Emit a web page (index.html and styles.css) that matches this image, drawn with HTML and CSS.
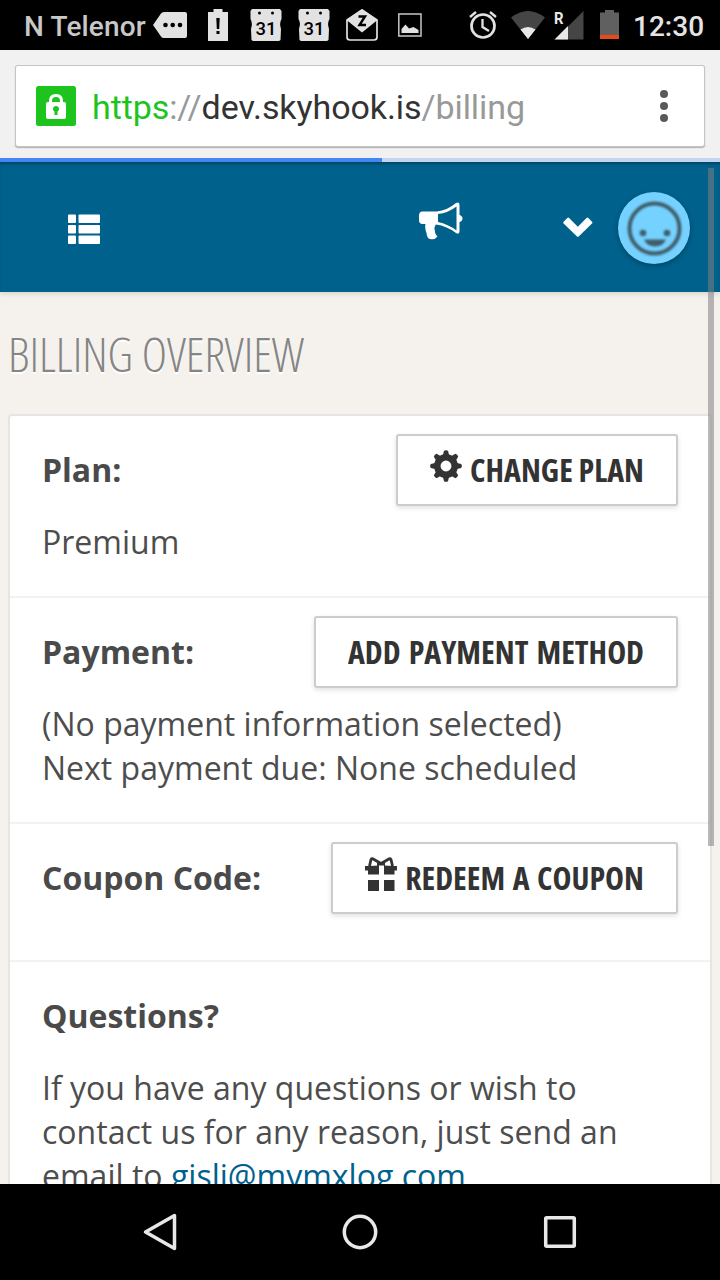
FILE: index.html
```
<!DOCTYPE html>
<html lang="en">
<head>
<meta charset="utf-8">
<title>Billing overview</title>
<link rel="stylesheet" href="styles.css">
</head>
<body>
<div class="screen">
  <header class="status">
    <span class="carrier">N Telenor</span>
    <svg class="status-icons" width="480" height="50" viewBox="150 0 480 50">
      <path fill="#e2e2e2" d="M153 25L161 13.500Q162 12 164 12H185Q187 12 187 14V36Q187 38 185 38H164Q162 38 161 36.500Z"/>
      <g fill="#000"><circle cx="165.500" cy="25" r="2.300"/><circle cx="172.700" cy="25" r="2.300"/><circle cx="180" cy="25" r="2.300"/></g>
      <path fill="#e2e2e2" d="M208 12H213.500V9H222.500V12H228V41H208Z"/>
      <path fill="#000" d="M216.300 18H219.700L219.200 29H216.800ZM216.500 31H219.500V34H216.500Z"/>
      <g id="calendar">
        <path fill="#e2e2e2" d="M252 9H280L281.500 11V19Q279 23 281 29L280.500 40L279 41H253L251.500 40L251 29Q253 23 250.500 19V11Z"/>
        <circle cx="259.500" cy="13" r="1.500"/><circle cx="272.500" cy="13" r="1.500"/>
        <text class="day" x="266" y="34.500" text-anchor="middle" textLength="21" lengthAdjust="spacingAndGlyphs">31</text>
      </g>
      <use href="#calendar" x="48"/>
      <path fill="none" stroke="#e2e2e2" stroke-width="1.700" stroke-linejoin="round" d="M347 20V37Q347 40 350 40H374Q377 40 377 37V20L362 10Z"/>
      <path fill="#e2e2e2" d="M346.500 20L362 9L377.500 20L362 32.500Z"/>
      <path fill="none" stroke="#000" stroke-width="2.400" d="M358.500 16.500H365L359.500 25H366"/>
      <rect x="398.800" y="14" width="22.200" height="22" fill="none" stroke="#b7bdb9" stroke-width="1.600"/>
      <path fill="#e2e2e2" d="M401.500 33V29L405.500 24.500L409 28.500L413.500 27L418.500 30V33Z"/>
      <circle cx="483" cy="26" r="11.500" fill="none" stroke="#e2e2e2" stroke-width="2.700"/>
      <path fill="none" stroke="#e2e2e2" stroke-width="2.300" d="M482.500 19V27L489 31M470 17L476 12M490 12L496 17"/>
      <path fill="#454545" d="M511 17.500Q528 4.500 545 17.500L528 39Z"/>
      <path fill="#e8e8e8" d="M520.500 29.500Q528 24.500 535.500 29.500L528 39Z"/>
      <path fill="#454545" d="M583.500 11V39.500H555Z"/>
      <path fill="#e8e8e8" d="M568 26V39.500H554.500Z"/>
      <path fill="#000" d="M553 8H567V26H553Z"/>
      <text class="roaming" x="554" y="24" textLength="9.500" lengthAdjust="spacingAndGlyphs">R</text>
      <path fill="#606060" d="M600 12.500H605V10H614V12.500H619V35H600Z"/>
      <path fill="#e64a19" d="M600 35H619V39H600Z"/>
    </svg>
    <span class="clock">12:30</span>
  </header>

  <div class="browser-bar">
    <div class="omnibox">
      <svg class="lock" width="40" height="40" viewBox="0 0 40 40">
        <rect width="40" height="40" rx="2.500" fill="#1ec41e"/>
        <path fill="none" stroke="#fff" stroke-width="3" d="M14.500 18V15Q14.500 9.500 20 9.500T25.500 15V18"/>
        <rect x="10" y="16" width="20" height="17" rx="2" fill="#fff"/>
        <path fill="#1ec41e" d="M18.500 25.500A3 3 0 1 1 21.500 25.500V29H18.500Z"/>
      </svg>
      <span class="url"><span class="scheme">https</span>://<span class="host">dev.skyhook.is</span>/billing</span>
      <svg class="dots" width="8" height="32" viewBox="0 0 8 32" fill="#5a5a5a"><circle cx="4" cy="4" r="4"/><circle cx="4" cy="16" r="4"/><circle cx="4" cy="28" r="4"/></svg>
    </div>
  </div>
  <div class="progress"><div class="progress-value"></div></div>

  <main class="page">
    <nav class="topbar">
      <svg class="menu-icon" width="32" height="30" viewBox="0 0 32 30" fill="#fff">
        <rect width="8" height="8.500" y="0.500" rx="1"/><rect x="10.500" y="0.500" width="21.500" height="8.500" rx="1"/>
        <rect y="11" width="8" height="8.500" rx="1"/><rect x="10.500" y="11" width="21.500" height="8.500" rx="1"/>
        <rect y="21.500" width="8" height="8.500" rx="1"/><rect x="10.500" y="21.500" width="21.500" height="8.500" rx="1"/>
      </svg>
      <svg class="horn-icon" width="44" height="38" viewBox="0 0 44 38" fill="#fff">
        <path fill-rule="evenodd" d="M3.500 9.500H18Q28 8.500 37 1Q40.500-0.500 40.500 3V13Q43.500 14 43.500 16.500T40.500 20V29Q40.500 33 37 31Q28 24 17 22.500Q14.500 25 16 29Q15.500 32 18.500 34.500Q16 38 11 37Q8 36.500 7.500 31Q5.500 26 6.500 22H3.500Q0 22 0 18V13.500Q0 9.500 3.500 9.500ZM19 12V20Q29 22 37.500 28.500V4.500Q29 11 19 12Z"/>
      </svg>
      <svg class="chevron-icon" width="30" height="20" viewBox="0 0 30 20"><path fill="#fff" d="M0.600 4.800L4.300 1Q5.200 0.200 6.100 1L14.800 9.700L23.500 1Q24.500 0.200 25.400 1L29 4.800Q29.800 5.700 29 6.500L15.700 19.400Q14.800 20.100 14 19.400L0.600 6.500Q-0.100 5.700 0.600 4.800Z"/></svg>
      <div class="avatar">
        <svg width="72" height="72" viewBox="0 0 72 72" class="face">
          <circle cx="36.500" cy="36.500" r="25" fill="none" stroke="#3f5e6b" stroke-width="4"/>
          <circle cx="25" cy="41" r="3.300" fill="#3f5e6b"/><circle cx="49" cy="41" r="3.300" fill="#3f5e6b"/>
          <path fill="#3f5e6b" d="M26 47.500H48Q45 54.500 37 54.500T26 47.500Z"/>
        </svg>
      </div>
    </nav>

    <h1 class="title">Billing overview</h1>

    <section class="card">
      <div class="row">
        <div class="row-head">
          <h2 class="label">Plan:</h2>
          <button class="button">
            <svg class="button-icon" width="32" height="32" viewBox="0 0 32 32"><g fill="#333"><circle cx="16" cy="16" r="8.700" fill="none" stroke="#333" stroke-width="6.500"/><g id="teeth"><path d="M12.700 6L14 0.800Q16 -0.500 18 0.800L19.300 6ZM12.700 26L14 31.200Q16 32.500 18 31.200L19.300 26Z"/><path d="M6 12.700L0.800 14Q-0.500 16 0.800 18L6 19.300ZM26 12.700L31.200 14Q32.500 16 31.200 18L26 19.300Z"/></g><use href="#teeth" transform="rotate(45 16 16)"/></g></svg>
            <span class="button-text">Change plan</span>
          </button>
        </div>
        <p class="copy">Premium</p>
      </div>
      <div class="row">
        <div class="row-head">
          <h2 class="label">Payment:</h2>
          <button class="button button-wide"><span class="button-text">Add payment method</span></button>
        </div>
        <p class="copy">(No payment information selected)<br>Next payment due: None scheduled</p>
      </div>
      <div class="row">
        <div class="row-head">
          <h2 class="label">Coupon Code:</h2>
          <button class="button button-coupon">
            <svg class="button-icon gift" width="32" height="34" viewBox="0 0 32 34"><path fill="none" stroke="#333" stroke-width="2.800" stroke-linejoin="round" d="M4.500 9L6 2.500Q7 1 9 2.500L16 6.500L23 2.500Q25 1 26 2.500L27.500 9"/><path fill="#333" d="M0 9H4L14 8.500V17.500H3V13.500H0ZM32 9H28L19 8.500V17.500H29.500V13.500H32ZM12 5.500H20V8.500H12ZM3 23H14V34H3ZM19 23H29.500V34H19Z"/></svg>
            <span class="button-text">Redeem a coupon</span>
          </button>
        </div>
        <p class="copy"></p>
      </div>
      <div class="row">
        <div class="row-head"><h2 class="label">Questions?</h2></div>
        <p class="copy">If you have any questions or wish to contact us for any reason, just send an email to <a class="link">gisli@mymxlog.com</a></p>
      </div>
    </section>
    <div class="scrollbar"></div>
  </main>

  <footer class="navbar">
    <svg width="40" height="40" viewBox="140 1212 40 40"><path fill="none" stroke="#e8e8e8" stroke-width="3.500" stroke-linejoin="round" d="M145.500 1232L174.500 1215.500V1248.500Z"/></svg>
    <svg width="40" height="40" viewBox="340 1212 40 40"><circle cx="360" cy="1232" r="15.700" fill="none" stroke="#e8e8e8" stroke-width="3.500"/></svg>
    <svg width="40" height="40" viewBox="540 1212 40 40"><rect x="545.700" y="1217.700" width="28.600" height="28.600" rx="1" fill="none" stroke="#e8e8e8" stroke-width="3.500"/></svg>
  </footer>
</div>
</body>
</html>
```
FILE: styles.css
```
* { box-sizing: border-box; }
body { margin: 0; background: #000; }
svg { display: block; flex: none; }

.screen {
  display: flex;
  flex-direction: column;
  width: 720px;
  height: 1280px;
  overflow: hidden;
}

.status {
  display: flex;
  flex: none;
  align-items: center;
  height: 50px;
  padding-left: 24px;
  background: #000;
  font: 500 28px/50px Roboto, sans-serif;
  white-space: nowrap;
}
.carrier { width: 126px; padding-top: 3px; color: #c8c8c8; letter-spacing: 0.15px; }
.clock { padding: 3px 0 0 3px; color: #e4e4e4; }
.day { font: 500 19px Roboto, sans-serif; }
.roaming { font: 700 16px Roboto, sans-serif; fill: #e8e8e8; }

.browser-bar { flex: none; height: 108px; padding: 16px 16px 0; background: #f1f1f1; }
.omnibox {
  display: flex;
  align-items: center;
  height: 80px;
  padding: 0 36px 0 20px;
  border-radius: 2px;
  background: #fff;
  box-shadow: 0 0 0 1px #c4c4c4, 0 1px 1px 1px #b0b0b0;
}
.url {
  flex: 1;
  margin-left: 16px;
  padding-top: 1px;
  color: #999;
  font: 400 34px/44px Roboto, sans-serif;
  letter-spacing: -0.08px;
  white-space: nowrap;
}
.scheme { color: #1ec41e; }
.host { color: #333; }

.progress { flex: none; height: 4px; background: #c3d5f2; }
.progress-value { width: 382px; height: 4px; background: #4285f4; }

.page {
  position: relative;
  flex: none;
  height: 1022px;
  overflow: hidden;
  background: #f5f2ed;
  font-family: "Open Sans", sans-serif;
}
.topbar {
  display: flex;
  align-items: flex-start;
  height: 130px;
  padding: 30px 30px 0 68px;
  background: #00618c;
  box-shadow: inset 0 3px 3px -1px rgba(0, 0, 0, 0.3), 0 2px 5px rgba(0, 0, 0, 0.12);
}
.menu-icon { margin: 22px auto 0 0; }
.horn-icon { margin: 10px 100px 0 0; }
.chevron-icon { margin: 25px 25px 0 0; }
.avatar {
  width: 72px;
  height: 72px;
  border-radius: 50%;
  background: #75d1ff;
  box-shadow: 0 2px 5px rgba(0, 0, 0, 0.3);
}
.face { filter: blur(0.8px); }

.title {
  height: 122px;
  margin: 0;
  padding: 29px 0 0 8px;
  color: #858585;
  font-size: 48px;
  font-weight: 300;
  font-stretch: 75%;
  letter-spacing: -0.05px;
  line-height: 66px;
  text-shadow: 0 2px 0 #fff;
  text-transform: uppercase;
  white-space: nowrap;
}

.card {
  height: 1000px;
  margin: 0 8px;
  border: 2px solid #e5e5e5;
  border-radius: 4px;
  background: #fff;
}
.row { padding: 18px 32px 32px; border-bottom: 2px solid #f2f2f2; }
.row-head { display: flex; align-items: center; justify-content: space-between; height: 72px; }
.label { margin: 0; color: #4a4a4a; font-size: 32px; font-weight: 700; line-height: 44px; }
.copy { margin: 14px 0 0; color: #4d4d4d; font-size: 32px; letter-spacing: 0.01px; line-height: 44px; }
.link { color: #00618c; }

.button {
  display: flex;
  align-items: center;
  height: 72px;
  padding: 0 32px;
  border: 2px solid #ccc;
  border-radius: 3px;
  background: #fff;
  box-shadow: 0 2px 5px rgba(0, 0, 0, 0.12);
  color: #333;
  font: 700 32px/44px "Open Sans", sans-serif;
  font-stretch: 75%;
  text-transform: uppercase;
  white-space: nowrap;
}
.button-wide { word-spacing: 2.4px; }
.button-coupon { word-spacing: 1.8px; }
.button-icon { margin: -8px 8px 0 0; }

.scrollbar {
  position: absolute;
  top: 6px;
  left: 708px;
  width: 6px;
  height: 678px;
  background: rgba(128, 128, 128, 0.55);
}

.navbar {
  display: flex;
  flex: none;
  align-items: center;
  justify-content: space-between;
  height: 96px;
  padding: 0 140px;
  background: #000;
}
```
